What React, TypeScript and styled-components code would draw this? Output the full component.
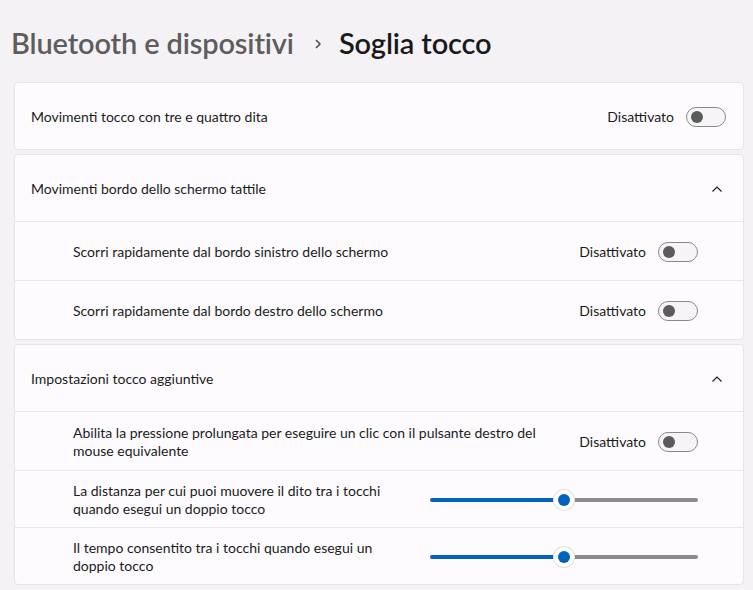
import React from "react";
import styled, { createGlobalStyle } from "styled-components";

const GlobalStyle = createGlobalStyle`
  html, body {
    margin: 0;
    padding: 0;
    background: #f5f2f6;
  }
  body {
    font-family: "Segoe UI", Lato, "Liberation Sans", sans-serif;
    color: #1b1b1b;
  }
`;

const Page = styled.div`
  width: 753px;
  height: 590px;
  overflow: hidden;
  box-sizing: border-box;
  padding: 0 9px 0 14px;
`;

const Breadcrumb = styled.div`
  display: flex;
  align-items: center;
  height: 82px;
  margin-left: -3px;
  padding-top: 11px;
  box-sizing: border-box;
  font-size: 29px;
  font-weight: 600;
  letter-spacing: -0.15px;
`;

const Crumb = styled.span<{ $current?: boolean }>`
  color: ${(p) => (p.$current ? "#1a1a1a" : "#5d5d5d")};
  line-height: 1;
  padding-bottom: 8px;
`;

const Sep = styled.svg`
  margin: 0 17px 0 20px;
  padding-bottom: 6px;
`;

const Stack = styled.div`
  display: flex;
  flex-direction: column;
  gap: 4px;
`;

const Card = styled.div`
  background: #fdfbfd;
  border: 1px solid #e6e4e7;
  border-radius: 4px;
  overflow: hidden;
`;

const Row = styled.div<{ $sub?: boolean; $h: number }>`
  display: flex;
  align-items: center;
  justify-content: space-between;
  min-height: ${(p) => p.$h}px;
  box-sizing: border-box;
  padding: ${(p) => (p.$sub ? "1px 45px 0 58px" : "1px 17px 0 16px")};
  & + & {
    border-top: 1px solid #e8e6e9;
  }
`;

const Label = styled.div<{ $max?: number }>`
  font-size: 14px;
  line-height: 18px;
  max-width: ${(p) => (p.$max ? `${p.$max}px` : "none")};
`;

const Right = styled.div`
  display: flex;
  align-items: center;
  gap: 12px;
  font-size: 14px;
`;

const Toggle = styled.div`
  width: 40px;
  height: 20px;
  box-sizing: border-box;
  border: 1px solid #8a888b;
  border-radius: 10px;
  background: #f6f4f6;
  display: flex;
  align-items: center;
  padding-left: 4px;
`;

const Knob = styled.div`
  width: 12px;
  height: 12px;
  border-radius: 50%;
  background: #5c5b5c;
`;

const Chevron = styled.svg`
  margin-right: 3px;
`;

const SliderWrap = styled.div`
  width: 268px;
  height: 22px;
  position: relative;
  display: flex;
  align-items: center;
`;

const Track = styled.div<{ $filled?: boolean }>`
  height: 4px;
  border-radius: 2px;
  background: ${(p) => (p.$filled ? "#0063bd" : "#8c8a8c")};
`;

const Thumb = styled.div`
  position: absolute;
  top: 1px;
  width: 20px;
  height: 20px;
  margin-left: -10px;
  border-radius: 50%;
  background: #ffffff;
  box-shadow: 0 0 0 1px #e2e0e3;
  display: flex;
  align-items: center;
  justify-content: center;
`;

const ThumbDot = styled.div`
  width: 12px;
  height: 12px;
  border-radius: 50%;
  background: #0063bd;
`;

const Switch = () => (
  <Right>
    <span>Disattivato</span>
    <Toggle>
      <Knob />
    </Toggle>
  </Right>
);

const Up = () => (
  <Chevron width="12" height="8" viewBox="0 0 12 8">
    <path d="M1.5 6.5 L6 2 L10.5 6.5" fill="none" stroke="#1b1b1b" strokeWidth="1.1" />
  </Chevron>
);

const Slider = ({ value }: { value: number }) => {
  const pos = (268 * value) / 100;
  return (
    <SliderWrap>
      <Track $filled style={{ width: pos }} />
      <Track style={{ flex: 1 }} />
      <Thumb style={{ left: pos }}>
        <ThumbDot />
      </Thumb>
    </SliderWrap>
  );
};

export default function App() {
  return (
    <>
      <GlobalStyle />
      <Page>
        <Breadcrumb>
          <Crumb>Bluetooth e dispositivi</Crumb>
          <Sep width="8" height="12" viewBox="0 0 8 12">
            <path d="M2 2 L6 6 L2 10" fill="none" stroke="#4a4a4a" strokeWidth="1.5" />
          </Sep>
          <Crumb $current>Soglia tocco</Crumb>
        </Breadcrumb>
        <Stack>
          <Card>
            <Row $h={66}>
              <Label>Movimenti tocco con tre e quattro dita</Label>
              <Switch />
            </Row>
          </Card>
          <Card>
            <Row $h={66}>
              <Label>Movimenti bordo dello schermo tattile</Label>
              <Up />
            </Row>
            <Row $sub $h={59}>
              <Label>Scorri rapidamente dal bordo sinistro dello schermo</Label>
              <Switch />
            </Row>
            <Row $sub $h={59}>
              <Label>Scorri rapidamente dal bordo destro dello schermo</Label>
              <Switch />
            </Row>
          </Card>
          <Card>
            <Row $h={66}>
              <Label>Impostazioni tocco aggiuntive</Label>
              <Up />
            </Row>
            <Row $sub $h={59}>
              <Label $max={480}>
                Abilita la pressione prolungata per eseguire un clic con il pulsante destro del
                mouse equivalente
              </Label>
              <Switch />
            </Row>
            <Row $sub $h={57}>
              <Label $max={330}>
                La distanza per cui puoi muovere il dito tra i tocchi quando esegui un doppio tocco
              </Label>
              <Slider value={50} />
            </Row>
            <Row $sub $h={57}>
              <Label $max={330}>Il tempo consentito tra i tocchi quando esegui un doppio tocco</Label>
              <Slider value={50} />
            </Row>
          </Card>
        </Stack>
      </Page>
    </>
  );
}
